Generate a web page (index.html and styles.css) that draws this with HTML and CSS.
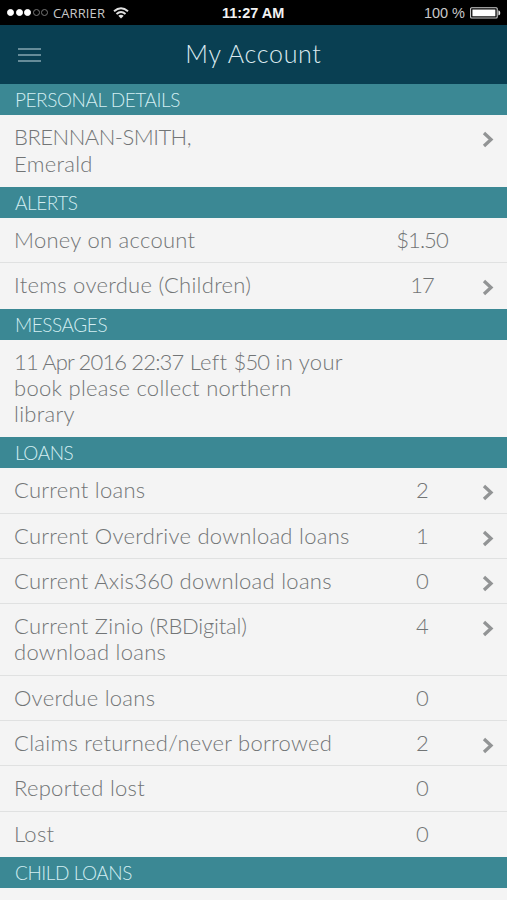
FILE: index.html
```html
<!DOCTYPE html>
<html lang="en">

<head>
  <meta charset="UTF-8">
  <meta name="viewport" content="width=device-width, initial-scale=1.0">
  <title>My Account</title>
  <link rel="stylesheet" href="styles.css">
</head>

<body>
  <svg class="defs" width="0" height="0">
    <symbol id="chevron" viewBox="0 0 12 17">
      <path d="M2 2 L9 8.5 L2 15" fill="none" stroke="#929495" stroke-width="3.3" />
    </symbol>
  </svg>

  <div class="status">
    <div class="signal">
      <i class="dot full"></i>
      <i class="dot full"></i>
      <i class="dot full"></i>
      <i class="dot"></i>
      <i class="dot"></i>
    </div>
    <span class="carrier">CARRIER</span>
    <svg class="wifi" width="16" height="12" viewBox="0 0 16 12">
      <g fill="none" stroke="#e2e2e2" stroke-width="2">
        <path d="M1 4.2 Q8 -1.8 15 4.2" />
        <path d="M3.5 6.9 Q8 3.2 12.5 6.9" />
      </g>
      <path d="M5.3 8.8 Q8 6.6 10.7 8.8 L8 11.6 Z" fill="#e2e2e2" />
    </svg>
    <span class="time">11:27 AM</span>
    <span class="percent">100 %</span>
    <svg class="battery" width="31" height="12" viewBox="0 0 31 12">
      <rect x="0.6" y="0.8" width="26.6" height="10.2" rx="1" fill="none" stroke="#d0d0d0" stroke-width="1.1" />
      <rect x="2.4" y="2.5" width="23" height="6.8" fill="#fff" />
      <path d="M28.4 3.6 h0.6 q1.3 0.6 1.3 2.3 t-1.3 2.3 h-0.6 z" fill="#e8e8e8" />
    </svg>
  </div>

  <header>
    <div class="menu">
      <i></i>
      <i></i>
      <i></i>
    </div>
    <h1>My Account</h1>
  </header>

  <h2>PERSONAL DETAILS</h2>
  <div class="row">
    <span class="label"><span class="surname">BRENNAN-SMITH,</span><br>Emerald</span>
    <span class="value"></span>
    <svg class="chevron"><use href="#chevron" /></svg>
  </div>

  <h2>ALERTS</h2>
  <div class="row">
    <span class="label">Money on account</span>
    <span class="value">$1.50</span>
  </div>
  <div class="row">
    <span class="label">Items overdue (Children)</span>
    <span class="value">17</span>
    <svg class="chevron"><use href="#chevron" /></svg>
  </div>

  <h2>MESSAGES</h2>
  <div class="row">
    <span class="label"><span class="stamp">11 Apr 2016 22:37</span> Left <span class="stamp">$50</span> in your<br>book please collect northern<br>library</span>
  </div>

  <h2>LOANS</h2>
  <div class="row">
    <span class="label">Current loans</span>
    <span class="value">2</span>
    <svg class="chevron"><use href="#chevron" /></svg>
  </div>
  <div class="row">
    <span class="label">Current Overdrive download loans</span>
    <span class="value">1</span>
    <svg class="chevron"><use href="#chevron" /></svg>
  </div>
  <div class="row">
    <span class="label">Current Axis360 download loans</span>
    <span class="value">0</span>
    <svg class="chevron"><use href="#chevron" /></svg>
  </div>
  <div class="row">
    <span class="label">Current Zinio <span class="brand">(RBDigital)</span><br>download loans</span>
    <span class="value">4</span>
    <svg class="chevron"><use href="#chevron" /></svg>
  </div>
  <div class="row">
    <span class="label">Overdue loans</span>
    <span class="value">0</span>
  </div>
  <div class="row">
    <span class="label">Claims returned/never borrowed</span>
    <span class="value">2</span>
    <svg class="chevron"><use href="#chevron" /></svg>
  </div>
  <div class="row">
    <span class="label">Reported lost</span>
    <span class="value">0</span>
  </div>
  <div class="row">
    <span class="label">Lost</span>
    <span class="value">0</span>
  </div>

  <h2>CHILD LOANS</h2>
</body>

</html>
```
FILE: styles.css
```css
* {
  box-sizing: border-box;
}

body {
  margin: 0;
  height: 900px;
  overflow: hidden;
  background: #f4f4f4;
  color: #727576;
  font-family: Lato, "Open Sans", sans-serif;
  font-weight: 300;
}

.defs {
  display: block;
}

.status {
  display: grid;
  grid-template-columns: 46px 60px 109px 1fr auto 31px;
  align-items: center;
  height: 25px;
  padding: 0 6px 0 7px;
  background: #000;
  color: #c8c8c8;
  font: 14px "Liberation Sans", Arial, sans-serif;
}

.signal {
  display: flex;
  gap: 1.5px;
}

.dot {
  width: 7px;
  height: 7px;
  border: 1px solid #777;
  border-radius: 50%;
}

.dot.full {
  background: #fff;
  border-color: #fff;
}

.carrier {
  font-family: "Open Sans", sans-serif;
  font-size: 13px;
  letter-spacing: 0.1px;
}

.time {
  color: #f2f2f2;
  font-size: 14.5px;
  font-weight: bold;
}

.percent {
  margin-right: 5px;
  font-size: 14.5px;
}

header {
  display: grid;
  grid-template-columns: 24px 1fr 24px;
  align-items: center;
  height: 59.3px;
  padding: 0 18px;
  background: #093f52;
}

.menu {
  display: flex;
  flex-direction: column;
  gap: 4px;
}

.menu i {
  width: 23px;
  height: 2px;
  background: #668c99;
}

h1 {
  margin: 0 0 3px;
  color: #dceaf0;
  font-size: 25px;
  font-weight: 300;
  letter-spacing: 0.7px;
  text-align: center;
}

h2 {
  height: 31.2px;
  margin: 0;
  padding-left: 15px;
  background: #3b8894;
  color: #d3eef2;
  font-size: 19px;
  font-weight: 300;
  letter-spacing: -0.45px;
  line-height: 31px;
}

.row {
  display: grid;
  grid-template-columns: 366px 84px 1fr;
  align-items: start;
  padding: 9px 0 9.2px 14px;
  border-bottom: 1px solid #e0e1e1;
  font-size: 22px;
  line-height: 26.1px;
}

.row:has(+ h2) {
  border-color: #f4f4f4;
}

.label {
  letter-spacing: 0.28px;
  white-space: nowrap;
}

.surname {
  letter-spacing: -0.5px;
}

.brand {
  letter-spacing: -0.2px;
}

.stamp {
  letter-spacing: -0.85px;
}

.value {
  letter-spacing: -0.9px;
  text-align: center;
}

.chevron {
  width: 12px;
  height: 17px;
  margin: 7px 0 0 18px;
}
```
